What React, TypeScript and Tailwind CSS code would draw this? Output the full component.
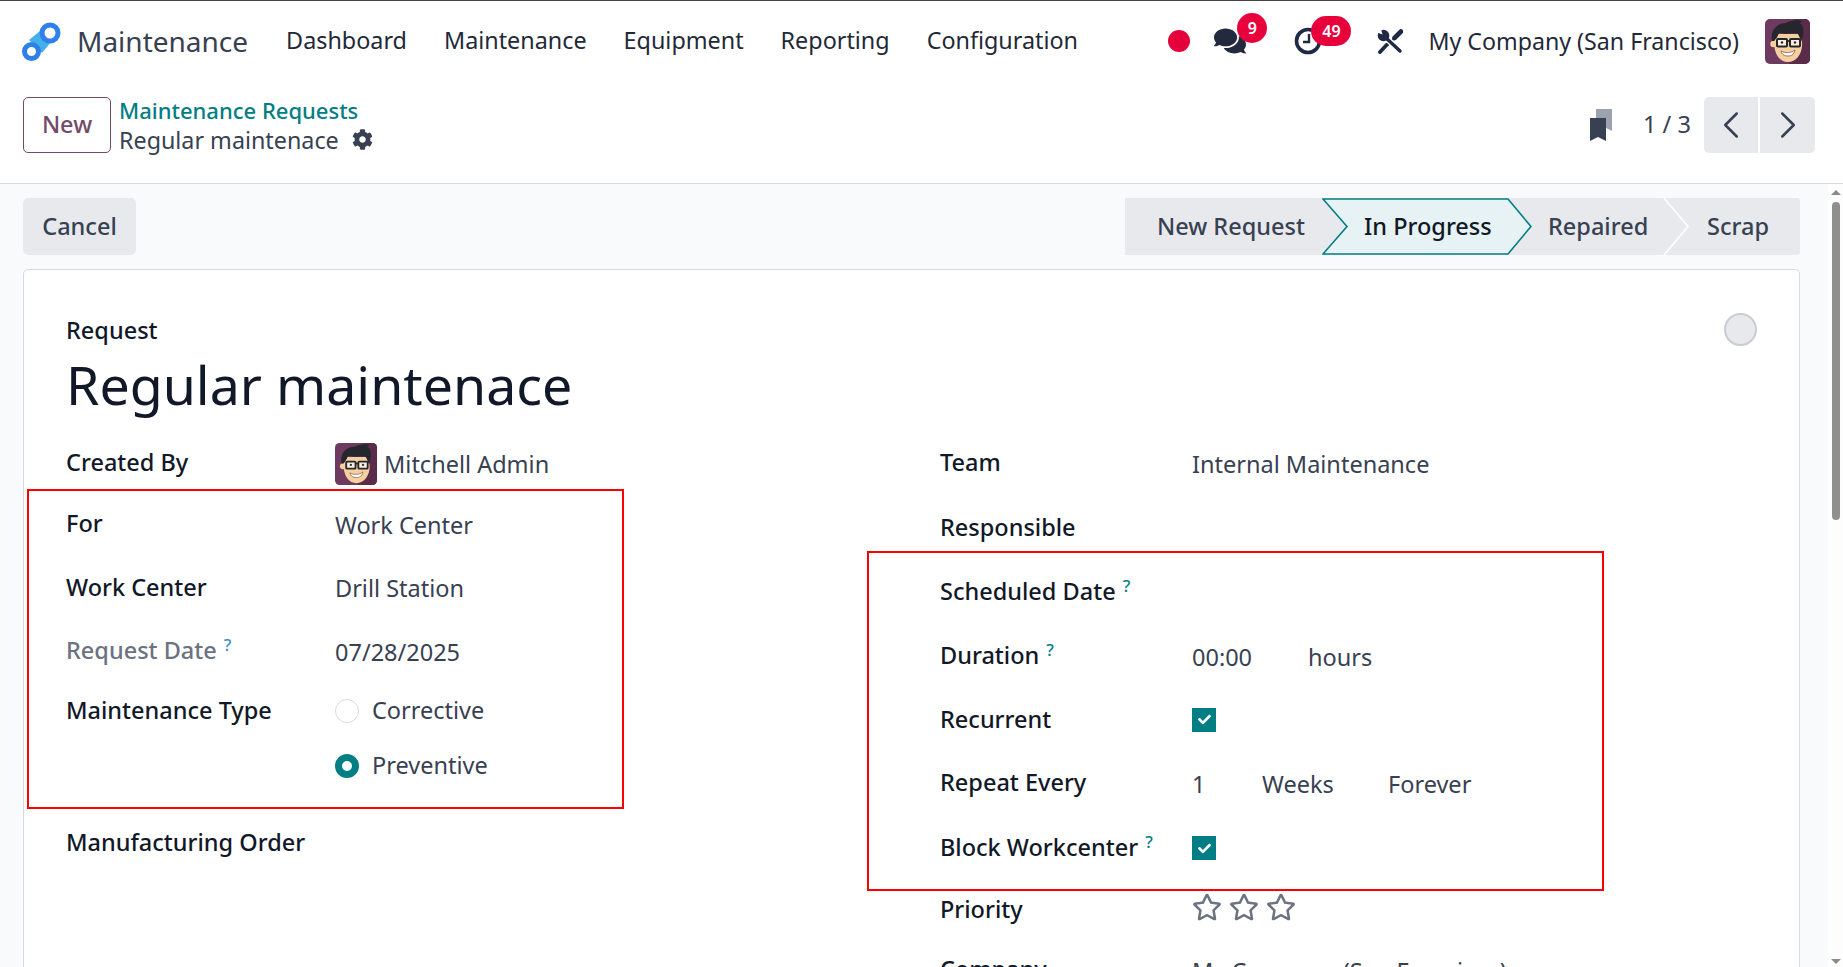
import { FaCheck, FaCog, FaComments, FaRegStar } from "react-icons/fa";
import { ChevronLeft, ChevronRight } from "lucide-react";

const navItems = ["Dashboard", "Maintenance", "Equipment", "Reporting", "Configuration"];

function Avatar({ size }: { size: string }) {
  return (
    <svg viewBox="0 0 45 45" className={size}>
      <rect width="45" height="45" rx="5" fill="#6e3a60" />
      <path d="M30 0h10a5 5 0 0 1 5 5v35a5 5 0 0 1-5 5H24z" fill="#5a2c49" />
      <path d="M9 22c0 14 6 21 14 21s15-8 14-20l-3-8H13z" fill="#f4cfa0" />
      <circle cx="8.500" cy="25" r="3.200" fill="#f4cfa0" />
      <path d="M7 22C5 10 13 4 21 4c4-2.500 10-3.500 16-2-1 1-2 2-3 2 4 1 5 6 4 13l-2 5c-1-3-2-6-4-8-6 1-13 1-18 0-1 3-3 6-5 8z" fill="#26262f" />
      <rect x="12" y="20" width="10" height="7.500" rx="1" fill="#fbeedd" stroke="#26262f" strokeWidth="2" />
      <rect x="25" y="20" width="10" height="7.500" rx="1" fill="#fbeedd" stroke="#26262f" strokeWidth="2" />
      <path d="M22 22h3" stroke="#26262f" strokeWidth="1.800" />
      <circle cx="17" cy="23.500" r="1.200" fill="#26262f" />
      <circle cx="30" cy="23.500" r="1.200" fill="#26262f" />
      <path d="M16 32c5 2.500 10 2 14-1-1 5-4 6-7 6s-6-1-7-5z" fill="#fff" stroke="#8a5a3c" strokeWidth="0.800" />
    </svg>
  );
}

function Logo() {
  return (
    <svg viewBox="0 0 42 42" className="w-[42px] h-[42px] shrink-0">
      <path d="M20 11 31 22 22 33 9 20z" fill="#45b0e8" />
      <circle cx="30" cy="13" r="8" fill="#fff" stroke="#2f80ed" strokeWidth="5" />
      <circle cx="11.500" cy="31.500" r="7" fill="#fff" stroke="#2f80ed" strokeWidth="5" />
    </svg>
  );
}

function ClockIcon() {
  return (
    <svg viewBox="0 0 28 28" className="w-[28px] h-[28px]">
      <circle cx="14" cy="14" r="11.500" fill="none" stroke="#1f2a44" strokeWidth="3.600" />
      <path d="M15 7v8H9" fill="none" stroke="#1f2a44" strokeWidth="2.400" />
    </svg>
  );
}

function ToolsIcon() {
  return (
    <svg viewBox="0 0 26 25" className="w-[26px] h-[25px]">
      <path d="M24 2.500 17.500 9" stroke="#1f2a44" strokeWidth="4.600" strokeLinecap="round" />
      <path d="M17.500 9 10 16.500" stroke="#1f2a44" strokeWidth="1.800" />
      <path d="M10 15.500 3 23" stroke="#1f2a44" strokeWidth="3.800" strokeLinecap="round" />
      <path d="M7.500 7.500 23 22" stroke="#fff" strokeWidth="6" />
      <path d="M7.500 7.500 23 22" stroke="#1f2a44" strokeWidth="3.400" strokeLinecap="round" />
      <circle cx="6.500" cy="6.500" r="5.800" fill="#1f2a44" />
      <path d="M5.500 5.500 0 3.500V0h4z" fill="#fff" />
    </svg>
  );
}

function BookmarkIcon() {
  return (
    <svg viewBox="0 0 22 32" className="w-[22px] h-[32px]">
      <path d="M6 0h16v22l-6-3V9H6z" fill="#9ca3af" />
      <path d="M0 9h16v23l-8-4-8 4z" fill="#374151" />
    </svg>
  );
}

function Help({ muted }: { muted?: boolean }) {
  return (
    <sup className={"ml-[7px] text-[17px] font-medium " + (muted ? "text-[#3f8fc0]" : "text-[#017e84]")}>?</sup>
  );
}

function Field({ label, height, children, className }: { label: React.ReactNode; height: string; children?: React.ReactNode; className?: string }) {
  return (
    <div className={"flex items-center " + height}>
      <div className={"w-[269px] shrink-0 font-medium " + (className ?? "text-[#111827]")}>{label}</div>
      <div className="flex items-center pt-[3px] text-[#374151]">{children}</div>
    </div>
  );
}

function RightField({ label, height, children }: { label: React.ReactNode; height: string; children?: React.ReactNode }) {
  return (
    <div className={"flex items-center " + height}>
      <div className="w-[252px] shrink-0 font-medium text-[#111827]">{label}</div>
      <div className="flex items-center pt-[3px] text-[#374151]">{children}</div>
    </div>
  );
}

function Radio({ checked, label }: { checked?: boolean; label: string }) {
  return (
    <div className="flex items-center gap-[13px] mt-[-3px]">
      <span className={checked ? "w-[24px] h-[24px] rounded-full border-[7px] border-[#017e84] bg-white" : "w-[24px] h-[24px] rounded-full border border-[#d8dadd] bg-white"} />
      <span>{label}</span>
    </div>
  );
}

function Check() {
  return (
    <span className="w-[24px] h-[24px] bg-[#017e84] flex items-center justify-center text-white mt-[-3px]">
      <FaCheck size={13} />
    </span>
  );
}

export default function App() {
  return (
    <div className="w-[1843px] h-[967px] overflow-hidden flex flex-col bg-white border-t border-[#444] text-[23.5px] text-[#374151] font-['Noto_Sans',sans-serif]">
      {/* Navbar */}
      <header className="h-[80px] flex items-center justify-between pl-[20px] pr-[33px] shrink-0">
        <div className="flex items-center">
          <Logo />
          <span className="ml-[15px] mr-[38px] text-[28px] text-[#374151] whitespace-nowrap">Maintenance</span>
          <nav className="flex items-center gap-[37px] text-[23.35px] text-[#1f2937]">
            {navItems.map((item) => (
              <a key={item}>{item}</a>
            ))}
          </nav>
        </div>
        <div className="flex items-center text-[#1f2a44]">
          <span className="w-[22px] h-[22px] rounded-full bg-[#e4003a]" />
          <div className="relative ml-[24px] w-[32px] h-[32px] flex items-center">
            <FaComments size={32} className="text-[#232a3d]" />
            <span className="absolute left-[23px] top-[-12px] w-[30px] h-[30px] rounded-full bg-[#e8003c] text-white text-[16px] font-semibold flex items-center justify-center">9</span>
          </div>
          <div className="relative ml-[48px] w-[28px] h-[28px]">
            <ClockIcon />
            <span className="absolute left-[17px] top-[-11px] w-[40px] h-[30px] rounded-full bg-[#e8003c] text-white text-[16px] font-semibold flex items-center justify-center">49</span>
          </div>
          <div className="ml-[55px] w-[26px]">
            <ToolsIcon />
          </div>
          <span className="ml-[25px] text-[23.2px] text-[#1f2937] whitespace-nowrap">My Company (San Francisco)</span>
          <div className="ml-[26px]">
            <Avatar size="w-[45px] h-[45px]" />
          </div>
        </div>
      </header>

      {/* Control panel */}
      <div className="h-[103px] shrink-0 flex items-center justify-between pl-[23px] pr-[28px] pb-[15px] border-b border-[#d8dadd]">
        <div className="flex items-center gap-[8px]">
          <button className="w-[88px] h-[56px] rounded-[5px] border border-[#714b67] text-[#714b67] font-medium">New</button>
          <div className="flex flex-col leading-[30px]">
            <a className="text-[22px] text-[#017e84] font-medium">Maintenance Requests</a>
            <div className="flex items-center gap-[13px] text-[23.3px]">
              <span>Regular maintenace</span>
              <FaCog size={21} className="text-[#374151]" />
            </div>
          </div>
        </div>
        <div className="flex items-center">
          <BookmarkIcon />
          <span className="ml-[31px] mr-[14px] w-[47px] whitespace-nowrap">1 / 3</span>
          <div className="flex gap-[2px]">
            <button className="w-[54px] h-[56px] rounded-l-[5px] bg-[#e7e9ed] flex items-center justify-center">
              <ChevronLeft size={46} strokeWidth={1.300} />
            </button>
            <button className="w-[55px] h-[56px] rounded-r-[5px] bg-[#e7e9ed] flex items-center justify-center">
              <ChevronRight size={46} strokeWidth={1.300} />
            </button>
          </div>
        </div>
      </div>

      {/* Content */}
      <div className="flex-1 flex bg-[#f9fafb] min-h-0">
        <main className="flex-1 min-w-0 pl-[23px] pr-[28px] pt-[14px] overflow-hidden">
          <div className="flex items-center justify-between h-[57px] mb-[14px]">
            <button className="w-[113px] h-[57px] rounded-[5px] bg-[#e7e9ed] font-medium">Cancel</button>
            <div className="flex items-center h-[57px] w-[675px] bg-[#e7e9ed] rounded-r-[3px] font-medium">
              <div className="w-[197px] pl-[32px] whitespace-nowrap">New Request</div>
              <div className="relative w-[210px] h-[57px] flex items-center">
                <svg viewBox="0 0 210 57" className="absolute inset-0 w-[210px] h-[57px]">
                  <path d="M1 1H186L209 28.500 186 56H1L25 28.500z" fill="#e6f2f3" stroke="#017e84" strokeWidth="1.600" />
                </svg>
                <span className="relative ml-[42px] text-[#111827] whitespace-nowrap">In Progress</span>
              </div>
              <div className="relative w-[159px] h-[57px] flex items-center pl-[16px] whitespace-nowrap">
                Repaired
                <svg viewBox="0 0 28 57" className="absolute right-0 top-0 w-[28px] h-[57px]">
                  <path d="M1 0 25 28.500 1 57" fill="none" stroke="#fff" strokeWidth="1.600" />
                </svg>
              </div>
              <div className="pl-[16px] whitespace-nowrap">Scrap</div>
            </div>
          </div>

          {/* Sheet */}
          <div className="relative h-[800px] bg-white border border-[#d8dadd] rounded-t-[5px] px-[42px] pt-[45px]">
            <div className="flex justify-between items-start">
              <div>
                <div className="h-[30px] leading-[30px] font-medium text-[#111827]">Request</div>
                <h1 className="mt-[5px] h-[70px] leading-[70px] text-[53.7px] text-[#111827]">Regular maintenace</h1>
              </div>
              <span className="mt-[-2px] w-[33px] h-[33px] rounded-full bg-[#e7e9ed] border-2 border-[#c9ccd2]" />
            </div>

            <div className="flex mt-[12px]">
              <div className="w-[874px] shrink-0">
                <Field label="Created By" height="h-[62px]">
                  <Avatar size="w-[42px] h-[42px] mr-[7px] mt-[-1px]" />
                  Mitchell Admin
                </Field>
                <Field label="For" height="h-[60px]">Work Center</Field>
                <Field label="Work Center" height="h-[67px]">Drill Station</Field>
                <Field label={<>Request Date<Help muted /></>} height="h-[60px]" className="text-[#6b7280]">07/28/2025</Field>
                <Field label="Maintenance Type" height="h-[60px]"><Radio label="Corrective" /></Field>
                <Field label="" height="h-[50px]"><Radio checked label="Preventive" /></Field>
                <div className="h-[21px]" />
                <Field label="Manufacturing Order" height="h-[62px]" />
              </div>
              <div className="flex-1">
                <RightField label="Team" height="h-[62px]">Internal Maintenance</RightField>
                <RightField label="Responsible" height="h-[68px]" />
                <RightField label={<>Scheduled Date<Help /></>} height="h-[60px]" />
                <RightField label={<>Duration<Help /></>} height="h-[68px]">
                  <span className="w-[116px]">00:00</span>
                  <span>hours</span>
                </RightField>
                <RightField label="Recurrent" height="h-[59px]"><Check /></RightField>
                <RightField label="Repeat Every" height="h-[68px]">
                  <span className="w-[70px]">1</span>
                  <span className="w-[126px]">Weeks</span>
                  <span>Forever</span>
                </RightField>
                <RightField label={<>Block Workcenter<Help /></>} height="h-[62px]"><Check /></RightField>
                <RightField label="Priority" height="h-[62px]">
                  <div className="flex gap-[7px] text-[#6b7280] mt-[-9px]">
                    <FaRegStar size={30} />
                    <FaRegStar size={30} />
                    <FaRegStar size={30} />
                  </div>
                </RightField>
                <RightField label="Company" height="h-[58px]">My Company (San Francisco)</RightField>
              </div>
            </div>

            {/* Annotation boxes */}
            <div className="absolute left-[3px] top-[219px] w-[597px] h-[320px] border-2 border-[#f00] pointer-events-none" />
            <div className="absolute left-[843px] top-[281px] w-[737px] h-[340px] border-2 border-[#f00] pointer-events-none" />
          </div>
        </main>

        {/* Scrollbar */}
        <div className="w-[15px] shrink-0 flex flex-col items-center bg-[#fdfdfd] pt-[6px] pb-[3px]">
          <span className="w-0 h-0 border-x-[5px] border-x-transparent border-b-[5px] border-b-[#8a8a8a]" />
          <span className="mt-[7px] w-[8px] h-[318px] rounded-t-[4px] rounded-b-[4px] bg-[#8f8f8f]" />
          <span className="mt-auto w-0 h-0 border-x-[5px] border-x-transparent border-t-[5px] border-t-[#8a8a8a]" />
        </div>
      </div>
    </div>
  );
}
